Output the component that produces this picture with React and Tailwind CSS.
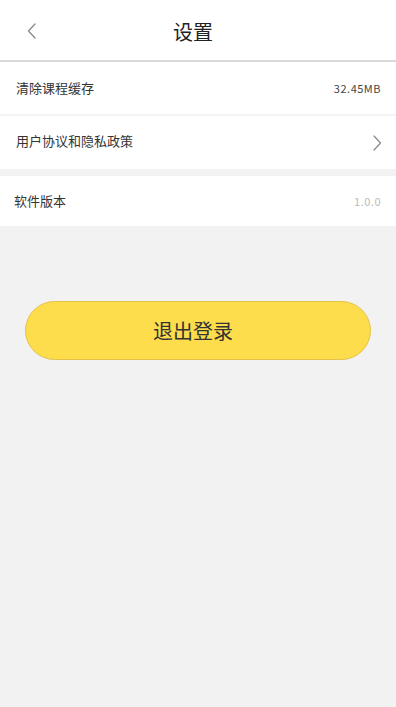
import React from "react";

export default function App() {
  const font = { fontFamily: '"Noto Sans CJK SC", "Noto Sans", sans-serif' };
  return (
    <div className="w-[396px] h-[707px] bg-[#f2f2f2] flex flex-col" style={font}>
      <div className="h-[60px] bg-white relative flex items-center justify-center">
        <svg className="absolute left-[26px] top-[22px]" width="12" height="18" viewBox="0 0 12 18" fill="none">
          <path d="M9 2 L2.5 9 L9 16" stroke="#888" strokeWidth="1.3" strokeLinecap="round" strokeLinejoin="round" />
        </svg>
        <span className="text-[20px] text-[#222] mt-[3px] mr-[10px]">设置</span>
      </div>
      <div className="h-[2px] bg-[#d9d9d9]" />
      <div className="h-[52px] bg-white flex items-center justify-between pl-[16px] pr-[15px]">
        <span className="text-[13px] text-[#333]">清除课程缓存</span>
        <span className="text-[11px] text-[#444] tracking-[0.5px]">32.45MB</span>
      </div>
      <div className="h-[2px] bg-[#f4f4f4]" />
      <div className="h-[53px] bg-white flex items-center justify-between pl-[16px] pr-[14px]">
        <span className="text-[13px] text-[#333] mb-[4px]">用户协议和隐私政策</span>
        <svg width="10" height="18" viewBox="0 0 10 18" fill="none">
          <path d="M2 2 L8.5 9 L2 16" stroke="#888" strokeWidth="1.2" strokeLinecap="round" strokeLinejoin="round" />
        </svg>
      </div>
      <div className="h-[7px] bg-[#f2f2f2]" />
      <div className="h-[50px] bg-white flex items-center justify-between pl-[14px] pr-[15px]">
        <span className="text-[13px] text-[#333]">软件版本</span>
        <span className="text-[11px] text-[#bbb] tracking-[0.5px]">1.0.0</span>
      </div>
      <div className="pt-[75px] px-[25px]">
        <div className="h-[59px] w-[346px] rounded-full bg-[#fedd4d] border border-[#e3c24a] flex items-center justify-center">
          <span className="text-[20px] text-[#333] mr-[10px]">退出登录</span>
        </div>
      </div>
    </div>
  );
}
